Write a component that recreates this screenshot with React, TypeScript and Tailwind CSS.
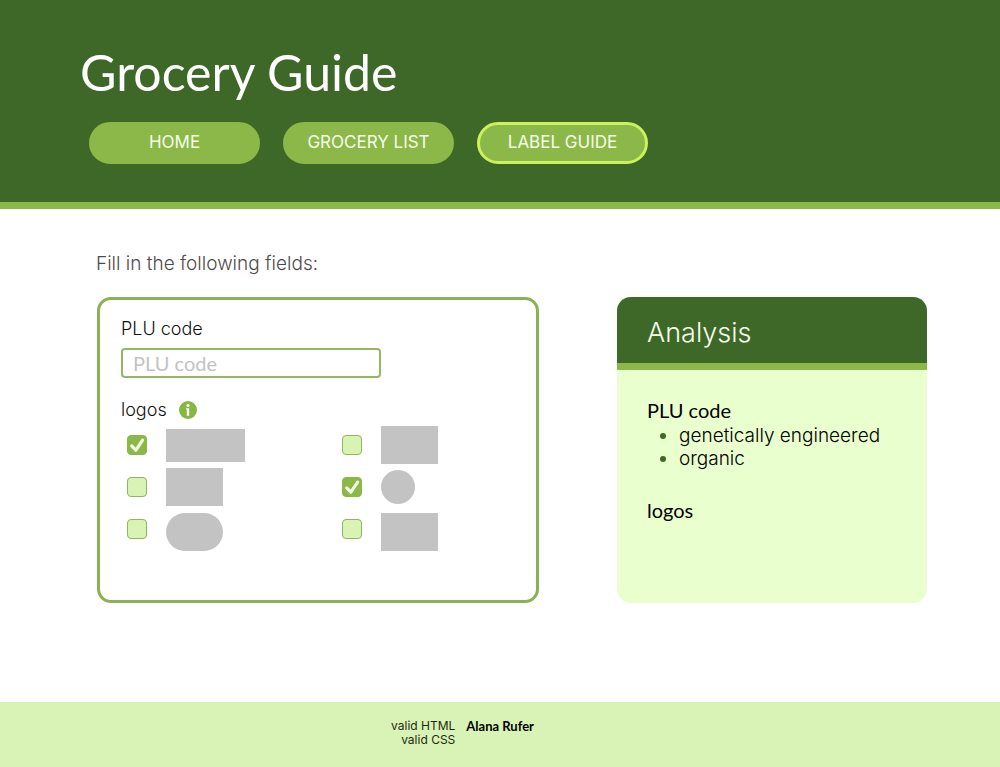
import { useState } from "react";

const navItems = [
  { label: "HOME", active: false },
  { label: "GROCERY LIST", active: false },
  { label: "LABEL GUIDE", active: true },
];

const logos = [
  { name: "Logo 1", shape: "h-[33px] w-[79px]", checked: true },
  { name: "Logo 2", shape: "h-[38px] w-[57px]", checked: false },
  { name: "Logo 3", shape: "h-[38px] w-[57px]", checked: false },
  { name: "Logo 4", shape: "h-[34px] w-[34px] rounded-full", checked: true },
  { name: "Logo 5", shape: "mt-1.5 h-[38px] w-[57px] rounded-[19px]", checked: false },
  { name: "Logo 6", shape: "mt-1.5 h-[38px] w-[57px]", checked: false },
];

function Header() {
  return (
    <header className="border-b-[7px] border-[#8bb849] bg-[#3d6828] px-20 pt-[42px] pb-[38px]">
      <h1 className="font-['Lato',sans-serif] text-[50px] leading-[60px] text-white">Grocery Guide</h1>
      <nav className="mt-5 ml-[9px] flex gap-[23px]">
        {navItems.map((item) => (
          <a
            key={item.label}
            href="#"
            aria-current={item.active ? "page" : undefined}
            className={
              "flex h-[42px] w-[171px] items-center justify-center rounded-full border-[3px] bg-[#8bb849] text-[17px] text-[#f6ffea] " +
              (item.active ? "border-[#cbf25c]" : "border-[#8bb849]")
            }
          >
            {item.label}
          </a>
        ))}
      </nav>
    </header>
  );
}

function LogoOption({ name, shape, initial }: { name: string; shape: string; initial: boolean }) {
  const [checked, setChecked] = useState(initial);
  return (
    <label className="flex h-[38px] items-center gap-[19px]">
      <span className="grid size-5 shrink-0 place-items-center">
        <input
          type="checkbox"
          aria-label={name}
          checked={checked}
          onChange={(e) => setChecked(e.target.checked)}
          className="col-start-1 row-start-1 size-5 appearance-none rounded-[4px] border border-[#8fb562] bg-[#d9f3b5] checked:border-[#8bb849] checked:bg-[#8bb849]"
        />
        {checked && (
          <svg viewBox="0 0 20 20" className="pointer-events-none col-start-1 row-start-1 size-5" fill="none">
            <path
              d="M4.7 10.9 8.9 15.2 15.6 5.2"
              stroke="#f3ffe3"
              strokeWidth="3.2"
              strokeLinecap="round"
              strokeLinejoin="round"
            />
          </svg>
        )}
      </span>
      <span className={"block bg-[#c3c3c3] " + shape} />
    </label>
  );
}

function LabelForm() {
  return (
    <form className="min-w-0 rounded-[14px] border-[3px] border-[#8bb155] px-[21px] pt-[17px] pb-[52px]">
      <label htmlFor="plu" className="block text-lg leading-6 font-light text-[#111]">
        PLU code
      </label>
      <input
        id="plu"
        type="text"
        placeholder="PLU code"
        className="mt-[7px] block h-[30px] w-[260px] rounded-[4px] border-2 border-[#92b865] px-2.5 font-['Lato',sans-serif] text-xl leading-6 outline-none placeholder:text-[#c3c3c3]"
      />
      <fieldset className="mt-5">
        <legend>
          <span className="flex h-6 items-center gap-3 text-lg leading-6 font-light text-[#111]">
            logos
            <button type="button" aria-label="About logos">
              <svg viewBox="0 0 18 18" className="block size-[18px]">
                <circle cx="9" cy="9" r="9" fill="#86b740" />
                <circle cx="9" cy="4.5" r="1.6" fill="#fff" />
                <path d="M7.2 7.2h3v7.6H7.8V8.6h-.6z" fill="#fff" />
              </svg>
            </button>
          </span>
        </legend>
        <div className="mt-1 ml-[6px] grid grid-cols-[215px_1fr] gap-y-1">
          {logos.map((logo) => (
            <LogoOption key={logo.name} name={logo.name} shape={logo.shape} initial={logo.checked} />
          ))}
        </div>
      </fieldset>
    </form>
  );
}

function Analysis() {
  return (
    <section className="min-w-0 overflow-hidden rounded-[14px] bg-[#e9ffcd]">
      <h2 className="border-b-[7px] border-[#8bb849] bg-[#3d6828] px-[30px] pt-5 pb-[14px] text-[27px] leading-8 font-light text-[#f6ffea]">
        Analysis
      </h2>
      <div className="px-[30px] pt-7 text-black">
        <h3 className="font-['Lato',sans-serif] text-xl leading-6">PLU code</h3>
        <ul className="mt-0.5 list-disc pl-8 text-[19px] leading-[23px] font-light marker:text-[#3d6828]">
          <li>genetically engineered</li>
          <li>organic</li>
        </ul>
        <h3 className="mt-7 font-['Lato',sans-serif] text-xl leading-6">logos</h3>
      </div>
    </section>
  );
}

export default function App() {
  return (
    <div className="flex min-h-screen flex-col bg-white font-['Inter',sans-serif]">
      <Header />
      <main className="pt-[43px] pr-[73px] pb-12 pl-24">
        <p className="text-[19px] leading-6 font-light text-[#4f4b4b]">Fill in the following fields:</p>
        <div className="mt-[21px] ml-px grid grid-cols-[442fr_310fr] gap-[78px]">
          <LabelForm />
          <Analysis />
        </div>
      </main>
      <footer className="mt-auto flex justify-center gap-[11px] bg-[#d9f3b6] pt-[17px] pr-[75px] pb-5 text-xs leading-[14px] text-[#1c2a10]">
        <div className="flex flex-col items-end">
          <a href="#">valid HTML</a>
          <a href="#">valid CSS</a>
        </div>
        <p className="font-['Lato',sans-serif] text-[13px] leading-[14px] font-bold text-black">Alana Rufer</p>
      </footer>
    </div>
  );
}
